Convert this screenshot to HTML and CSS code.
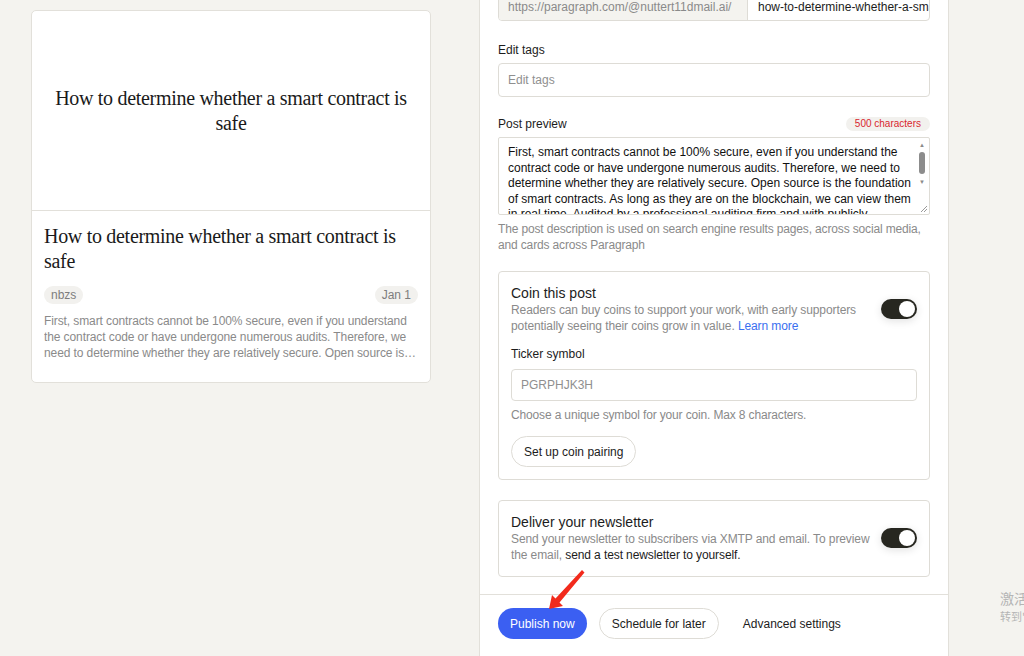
FILE: index.html
```html
<!DOCTYPE html>
<html lang="en">

<head>
  <meta charset="UTF-8">
  <meta name="viewport" content="width=device-width, initial-scale=1.0">
  <title>Publish</title>
  <link rel="stylesheet" href="styles.css">
</head>

<body>
  <div class="page">
    <div class="preview-col">
      <div class="post-card">
        <div class="post-cover">
          <div class="cover-title">How to determine whether a smart contract is safe</div>
        </div>
        <div class="post-body">
          <div class="post-title">How to determine whether a smart contract is safe</div>
          <div class="post-meta">
            <span class="chip">nbzs</span>
            <span class="chip">Jan 1</span>
          </div>
          <p class="post-excerpt">First, smart contracts cannot be 100% secure, even if you understand the contract code or have undergone numerous audits. Therefore, we need to determine whether they are relatively secure. Open source is the foundation of smart contracts.</p>
        </div>
      </div>
    </div>

    <div class="panel">
      <div class="panel-body">
        <div class="url-group">
          <div class="url-prefix">https://paragraph.com/@nuttert11dmail.ai/</div>
          <div class="url-slug">how-to-determine-whether-a-smart-contract-is-safe</div>
        </div>

        <label class="field-label">Edit tags</label>
        <div class="text-input placeholder">Edit tags</div>

        <div class="label-row">
          <label class="field-label">Post preview</label>
          <span class="count-badge">500 characters</span>
        </div>
        <div class="textarea">
          <div class="textarea-text">First, smart contracts cannot be 100% secure, even if you understand the contract code or have undergone numerous audits. Therefore, we need to determine whether they are relatively secure. Open source is the foundation of smart contracts. As long as they are on the blockchain, we can view them in real time. Audited by a professional auditing firm and with publicly</div>
          <div class="scrollbar">
            <span class="sb-arrow">&#9650;</span>
            <span class="sb-thumb"></span>
            <span class="sb-arrow">&#9660;</span>
          </div>
          <svg class="grip" width="9" height="9" viewBox="0 0 9 9"><path d="M8 2L2 8M8 5L5 8" stroke="#9a9a9a" stroke-width="1"/></svg>
        </div>
        <p class="help">The post description is used on search engine results pages, across social media, and cards across Paragraph</p>

        <div class="option-card">
          <div class="option-head">
            <div class="option-text">
              <div class="option-title">Coin this post</div>
              <div class="option-desc">Readers can buy coins to support your work, with early supporters potentially seeing their coins grow in value. <a href="#" class="link">Learn more</a></div>
            </div>
            <span class="toggle"><span class="knob"></span></span>
          </div>
          <label class="field-label ticker-label">Ticker symbol</label>
          <div class="text-input small placeholder">PGRPHJK3H</div>
          <p class="help">Choose a unique symbol for your coin. Max 8 characters.</p>
          <button class="btn btn-outline pairing">Set up coin pairing</button>
        </div>

        <div class="option-card newsletter">
          <div class="option-head">
            <div class="option-text">
              <div class="option-title">Deliver your newsletter</div>
              <div class="option-desc">Send your newsletter to subscribers via XMTP and email. To preview the email, <a href="#" class="dark-link">send a test newsletter to yourself.</a></div>
            </div>
            <span class="toggle"><span class="knob"></span></span>
          </div>
        </div>
      </div>

      <div class="panel-footer">
        <button class="btn btn-primary">Publish now</button>
        <button class="btn btn-outline">Schedule for later</button>
        <button class="btn btn-text">Advanced settings</button>
      </div>

      <svg class="arrow" width="40" height="50" viewBox="0 0 40 50">
        <polygon points="36.5,11.5 11.5,41.5 15,45 1,48 4,34 7.5,37.5 34,9" fill="#f22a1c"/>
      </svg>
    </div>

    <div class="watermark">
      <div class="wm-title">激活 Windows</div>
      <div class="wm-sub">转到"设置"以激活 Windows。</div>
    </div>
  </div>
</body>

</html>
```

FILE: styles.css
```css
* {
  margin: 0;
  padding: 0;
  box-sizing: border-box;
}

html,
body {
  height: 100%;
  overflow: hidden;
}

body {
  background: #f4f3ef;
  font-family: "Liberation Sans", Arial, "Noto Sans CJK SC", sans-serif;
  color: #1c1c1c;
}

.page {
  position: relative;
  display: flex;
  height: 656px;
}

/* 左侧预览卡片 */
.preview-col {
  width: 479px;
  padding: 10px 0 0 31px;
}

.post-card {
  width: 400px;
  background: #fff;
  border: 1px solid #e2e0da;
  border-radius: 5px;
  overflow: hidden;
}

.post-cover {
  height: 200px;
  display: flex;
  align-items: center;
  justify-content: center;
  padding: 0 22px;
  border-bottom: 1px solid #e2e0da;
}

.cover-title,
.post-title {
  font-family: "Liberation Serif", "DejaVu Serif", serif;
  font-size: 20px;
  line-height: 25px;
  letter-spacing: -0.3px;
  color: #1a1a1a;
}

.cover-title {
  text-align: center;
}

.post-body {
  padding: 13px 12px 21px 12px;
}

.post-meta {
  display: flex;
  justify-content: space-between;
  margin-top: 12px;
}

.chip {
  background: #f2f1ee;
  color: #7d7d7d;
  font-size: 12px;
  line-height: 18px;
  padding: 0 7px;
  border-radius: 9px;
}

.post-excerpt {
  margin-top: 9px;
  font-size: 12px;
  line-height: 16px;
  color: #8a8a8a;
  letter-spacing: -0.1px;
  display: -webkit-box;
  -webkit-line-clamp: 3;
  -webkit-box-orient: vertical;
  overflow: hidden;
}

/* 右侧发布面板 */
.panel {
  position: relative;
  width: 470px;
  height: 656px;
  background: #fff;
  border-left: 1px solid #e2e0da;
  border-right: 1px solid #e2e0da;
  display: flex;
  flex-direction: column;
}

.panel-body {
  padding: 0 18px;
  height: 595px;
  border-bottom: 1px solid #e2e0da;
}

.url-group {
  display: flex;
  height: 29px;
  margin-top: -8px;
  border: 1px solid #dedcd6;
  border-radius: 4px;
  overflow: hidden;
  font-size: 12px;
  line-height: 29px;
  white-space: nowrap;
}

.url-prefix {
  width: 249px;
  flex-shrink: 0;
  background: #f4f3ef;
  color: #8a8a8a;
  padding-left: 9px;
  border-right: 1px solid #dedcd6;
}

.url-slug {
  flex: 1;
  overflow: hidden;
  padding-left: 10px;
  color: #1c1c1c;
}

.field-label {
  display: block;
  font-size: 12px;
  line-height: 16px;
  color: #1c1c1c;
  margin-top: 21px;
}

.text-input {
  margin-top: 5px;
  height: 34px;
  border: 1px solid #dedcd6;
  border-radius: 4px;
  font-size: 12px;
  line-height: 32px;
  padding-left: 9px;
}

.placeholder {
  color: #8f8f8f;
}

.label-row {
  display: flex;
  justify-content: space-between;
  align-items: center;
  margin-top: 19px;
}

.label-row .field-label {
  margin-top: 0;
}

.count-badge {
  background: #f2f1ee;
  color: #d9272e;
  font-size: 10px;
  line-height: 14px;
  padding: 0 9px;
  border-radius: 7px;
}

.textarea {
  position: relative;
  margin-top: 5px;
  height: 78px;
  border: 1px solid #dedcd6;
  border-radius: 2px;
  overflow: hidden;
  display: flex;
}

.textarea-text {
  flex: 1;
  padding: 7px 0 0 9px;
  font-size: 12px;
  line-height: 15.6px;
  color: #111;
}

.scrollbar {
  width: 14px;
  display: flex;
  flex-direction: column;
  align-items: center;
  padding-top: 3px;
}

.sb-arrow {
  font-size: 6px;
  line-height: 9px;
  color: #8a8a8a;
}

.sb-thumb {
  width: 6px;
  height: 22px;
  background: #8c8c8c;
  border-radius: 3px;
  margin: 2px 0 4px;
}

.grip {
  position: absolute;
  right: 1px;
  bottom: 1px;
}

.help {
  margin-top: 6px;
  font-size: 12px;
  line-height: 16px;
  color: #8a8a8a;
  letter-spacing: -0.15px;
}

.option-card {
  margin-top: 18px;
  border: 1px solid #dedcd6;
  border-radius: 4px;
  padding: 12px;
}

.option-card.newsletter {
  margin-top: 20px;
  padding-bottom: 13px;
}

.option-head {
  display: flex;
  align-items: center;
  justify-content: space-between;
  gap: 8px;
}

.option-title {
  font-size: 14px;
  line-height: 18px;
  color: #1c1c1c;
}

.option-desc {
  font-size: 12px;
  line-height: 16px;
  color: #8a8a8a;
  letter-spacing: -0.1px;
}

.link {
  color: #3a6ff0;
  text-decoration: none;
}

.dark-link {
  color: #1c1c1c;
  text-decoration: none;
}

.toggle {
  position: relative;
  flex-shrink: 0;
  width: 36px;
  height: 20px;
  border-radius: 10px;
  background: #272720;
  box-shadow: 0 2px 8px rgba(0, 0, 0, 0.12);
}

.knob {
  position: absolute;
  top: 2px;
  right: 2px;
  width: 16px;
  height: 16px;
  border-radius: 50%;
  background: #fff;
}

.ticker-label {
  margin-top: 12px;
}

.text-input.small {
  height: 32px;
  line-height: 30px;
  margin-top: 7px;
}

.option-card .help {
  margin-top: 6px;
}

.btn {
  font-family: inherit;
  font-size: 12px;
  height: 31px;
  border-radius: 16px;
  padding: 0 12px;
  cursor: pointer;
  background: none;
  border: none;
  color: #1c1c1c;
}

.btn-outline {
  border: 1px solid #dedcd6;
  background: #fff;
}

.pairing {
  margin-top: 13px;
}

.btn-primary {
  background: #3b5ff2;
  color: #fff;
}

.btn-text {
  padding: 0 12px;
}

.panel-footer {
  display: flex;
  align-items: center;
  gap: 12px;
  padding: 13px 18px 0;
}

.arrow {
  position: absolute;
  left: 68px;
  top: 561px;
}

/* 右下角系统水印 */
.watermark {
  position: absolute;
  left: 1000px;
  top: 588px;
  white-space: nowrap;
  color: #b5b5b5;
  font-family: "Noto Sans CJK SC", sans-serif;
}

.wm-title {
  font-size: 14px;
  line-height: 20px;
}

.wm-sub {
  font-size: 11px;
  line-height: 16px;
}
```
